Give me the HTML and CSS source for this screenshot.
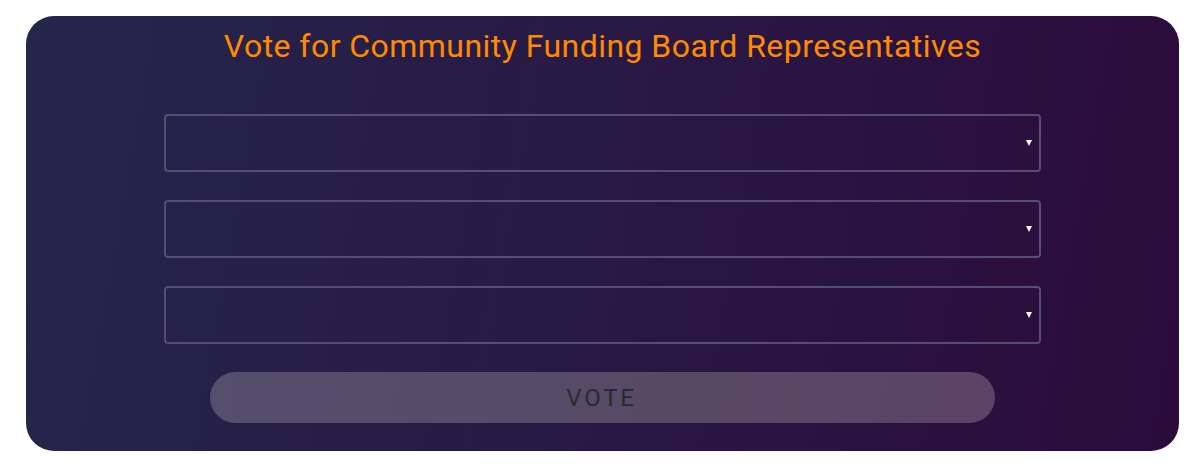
FILE: index.html
```html
<!DOCTYPE html>
<html lang="en">
<head>
<meta charset="utf-8">
<title>Vote</title>
<link rel="stylesheet" href="styles.css">
</head>
<body>
<main class="card">
  <h1 class="title">Vote for Community Funding Board Representatives</h1>
  <form class="form">
    <div class="field"><select class="select"><option></option></select><span class="arrow"></span></div>
    <div class="field"><select class="select"><option></option></select><span class="arrow"></span></div>
    <div class="field"><select class="select"><option></option></select><span class="arrow"></span></div>
    <button type="button" class="vote" disabled>VOTE</button>
  </form>
</main>
</body>
</html>
```
FILE: styles.css
```css
html, body {
  margin: 0;
  padding: 0;
  background: #ffffff;
}
body {
  padding: 16px 25px 18px 26px;
  font-family: Roboto, "Liberation Sans", sans-serif;
}
.card {
  box-sizing: border-box;
  height: 435px;
  border-radius: 28px;
  background: linear-gradient(100deg, #24264b 0%, #281a45 45%, #2c0b3b 100%);
  padding: 10px 0 0;
  display: flex;
  flex-direction: column;
  align-items: center;
}
.title {
  margin: 0;
  font-weight: 400;
  font-size: 32px;
  line-height: 40px;
  letter-spacing: 0.45px;
  color: #ff8a00;
  text-align: center;
}
.form {
  margin-top: 48px;
  display: flex;
  flex-direction: column;
  align-items: center;
  gap: 28px;
}
.field {
  position: relative;
  width: 877px;
  height: 58px;
}
.select {
  -webkit-appearance: none;
  appearance: none;
  box-sizing: border-box;
  width: 100%;
  height: 100%;
  background: transparent;
  border: 2px solid #574c71;
  border-radius: 4px;
  color: #ffffff;
  font-family: inherit;
  font-size: 16px;
  outline: none;
}
.arrow {
  position: absolute;
  right: 9px;
  top: 26px;
  width: 0;
  height: 0;
  border-left: 3.5px solid transparent;
  border-right: 3.5px solid transparent;
  border-top: 6px solid #ffffff;
  pointer-events: none;
}
.vote {
  width: 785px;
  height: 51px;
  border: none;
  border-radius: 26px;
  background: linear-gradient(100deg, #554e6d 0%, #574966 60%, #5c4366 100%);
  color: #2a2a2e;
  font-family: inherit;
  font-size: 24px;
  letter-spacing: 2.8px;
  padding: 0 2px 0 0;
}
```
